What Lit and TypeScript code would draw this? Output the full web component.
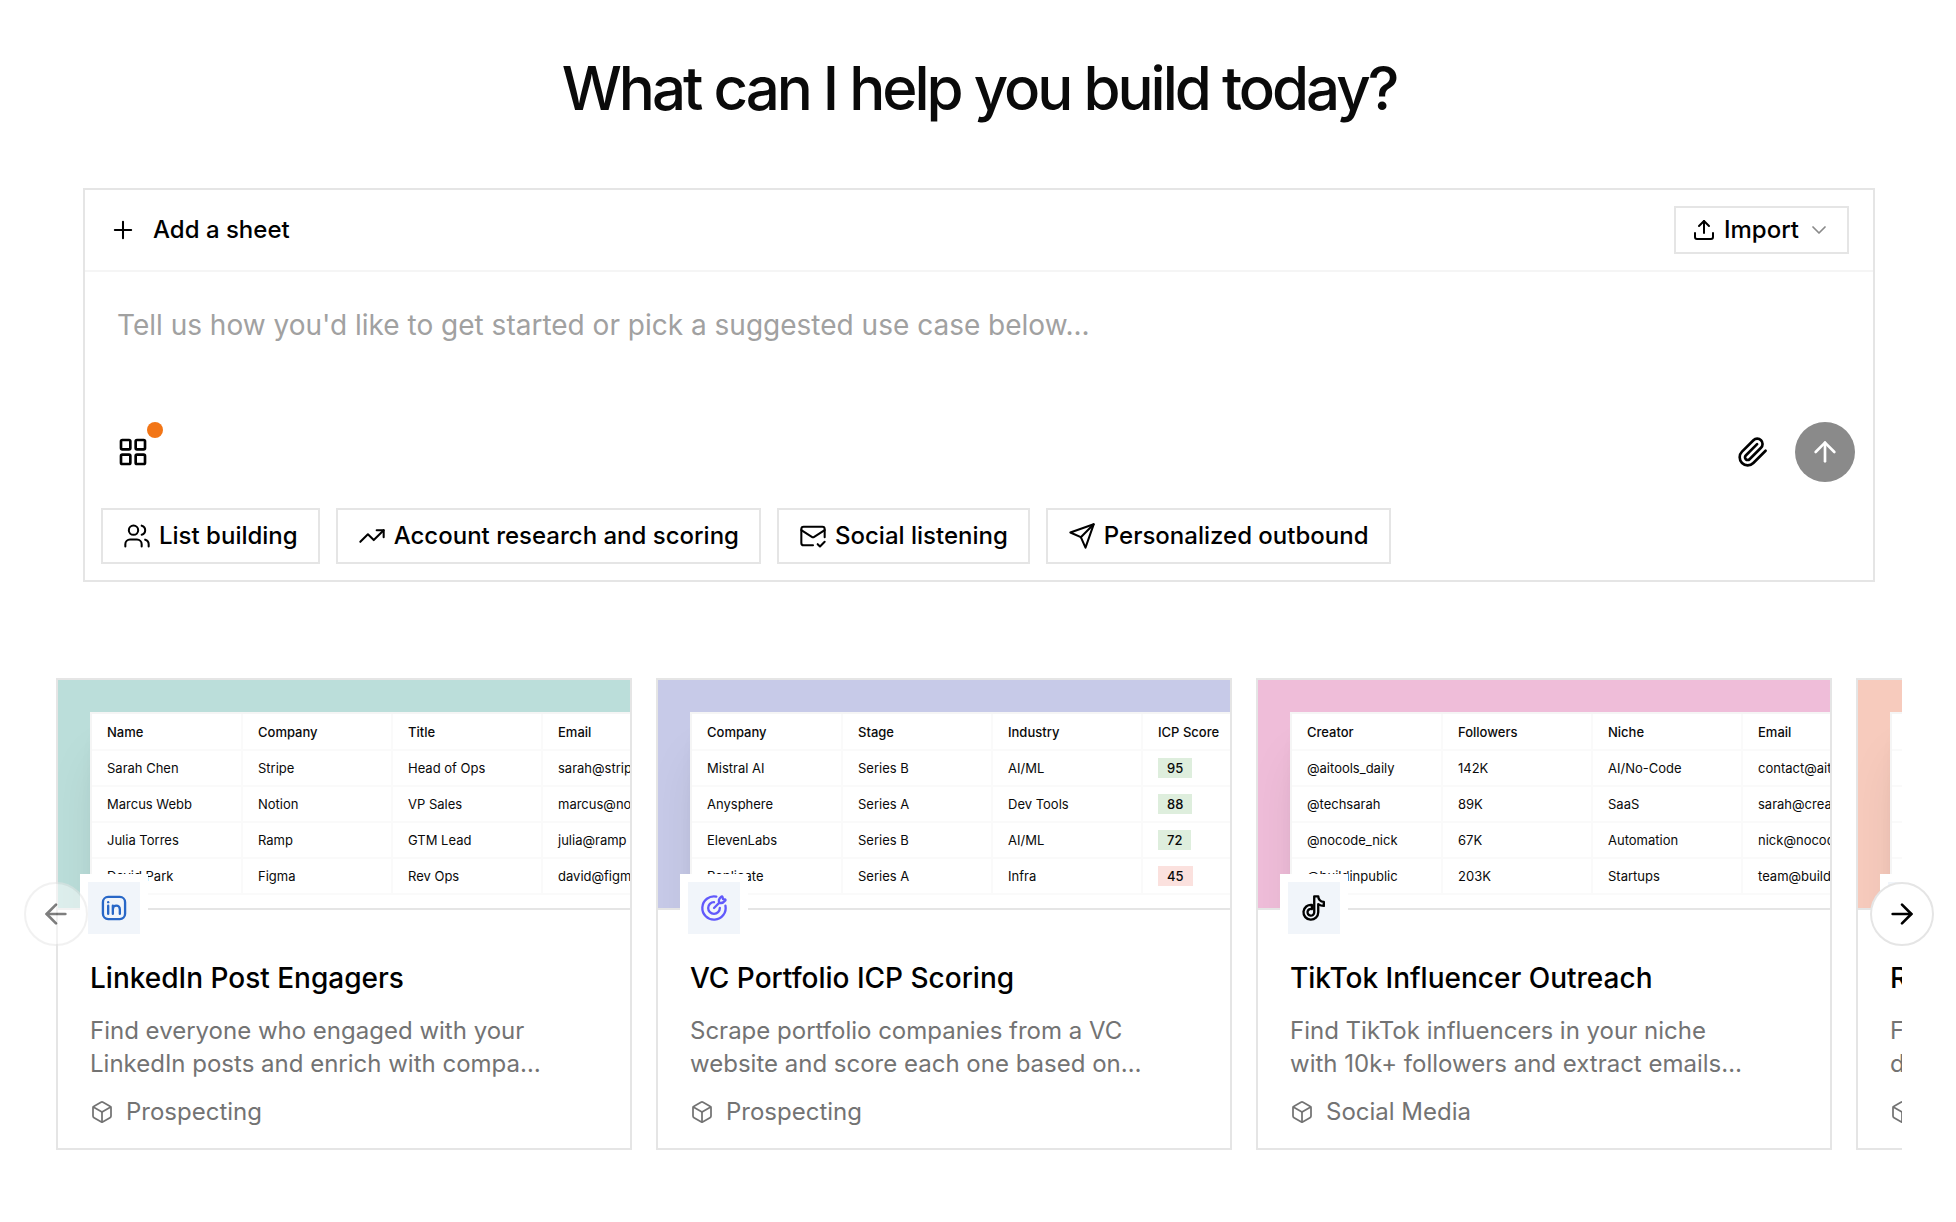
import { LitElement, html, css, svg, nothing, type SVGTemplateResult } from "lit";
import { customElement, property } from "lit/decorators.js";
import { classMap } from "lit/directives/class-map.js";

const ICONS: Record<string, SVGTemplateResult> = {
  plus: svg`<path d="M5 12h14M12 5v14"/>`,
  upload: svg`<path d="M21 15v4a2 2 0 0 1-2 2H5a2 2 0 0 1-2-2v-4"/><path d="m17 8-5-5-5 5"/><path d="M12 3v12"/>`,
  chevron: svg`<path d="m6 9 6 6 6-6"/>`,
  grid: svg`<rect x="3" y="3" width="7" height="7" rx="1"/><rect x="14" y="3" width="7" height="7" rx="1"/><rect x="14" y="14" width="7" height="7" rx="1"/><rect x="3" y="14" width="7" height="7" rx="1"/>`,
  clip: svg`<path d="m21.44 11.05-9.19 9.19a6 6 0 0 1-8.49-8.49l8.57-8.57A4 4 0 1 1 18 8.84l-8.59 8.57a2 2 0 0 1-2.83-2.83l8.49-8.48"/>`,
  up: svg`<path d="m5 12 7-7 7 7"/><path d="M12 19V5"/>`,
  left: svg`<path d="m12 19-7-7 7-7"/><path d="M19 12H5"/>`,
  right: svg`<path d="M5 12h14"/><path d="m12 5 7 7-7 7"/>`,
  users: svg`<path d="M16 21v-2a4 4 0 0 0-4-4H6a4 4 0 0 0-4 4v2"/><circle cx="9" cy="7" r="4"/><path d="M22 21v-2a4 4 0 0 0-3-3.87"/><path d="M16 3.13a4 4 0 0 1 0 7.75"/>`,
  trend: svg`<path d="m22 7-8.5 8.5-5-5L2 17"/><path d="M16 7h6v6"/>`,
  mail: svg`<path d="M22 13V6a2 2 0 0 0-2-2H4a2 2 0 0 0-2 2v12c0 1.1.9 2 2 2h8"/><path d="m22 7-8.97 5.7a1.94 1.94 0 0 1-2.06 0L2 7"/><path d="m16 19 2 2 4-4"/>`,
  send: svg`<path d="m22 2-7 20-4-9-9-4Z"/><path d="M22 2 11 13"/>`,
  box: svg`<path d="M21 8a2 2 0 0 0-1-1.73l-7-4a2 2 0 0 0-2 0l-7 4A2 2 0 0 0 3 8v8a2 2 0 0 0 1 1.73l7 4a2 2 0 0 0 2 0l7-4A2 2 0 0 0 21 16Z"/><path d="m3.3 7 8.7 5 8.7-5"/><path d="M12 22V12"/>`,
  linkedin: svg`<rect x="2.5" y="2.5" width="19" height="19" rx="4.5"/><path d="M7 10v7"/><path d="M11 13v4m0-4a3 3 0 0 1 6 0v4m-6-4v-3"/><path d="M7 7v.01"/>`,
  target: svg`<path d="M17 12a5 5 0 1 1-5-5"/><path d="M14 2.2A10 10 0 1 0 21.8 10"/><path d="m12.03 11.96 4.55-4.55m3.2-3.06-.55-1.9a.57.57 0 0 0-.91-.26c-1.45 1.2-3.04 2.8-1.74 5.22 2.5 1.16 3.99-.49 5.14-1.86a.58.58 0 0 0-.27-.93z"/>`,
  tiktok: svg`<path d="M16.82 5.13A4.76 4.76 0 0 1 15.65 2H12.2v13.78a2.88 2.88 0 1 1-2.03-2.87V9.4a6.33 6.33 0 1 0 5.47 6.27V8.68a8.2 8.2 0 0 0 4.78 1.54V6.78a4.78 4.78 0 0 1-3.6-1.65z"/>`,
};

@customElement("ui-icon")
class UiIcon extends LitElement {
  @property() name = "";
  @property({ type: Number }) size = 28;
  @property({ type: Number }) weight = 2;

  static styles = css`
    :host {
      display: flex;
      flex: none;
    }
    .glyph {
      display: block;
      fill: none;
      stroke: currentColor;
      stroke-linecap: round;
      stroke-linejoin: round;
    }
  `;

  render() {
    return html`<svg class="glyph" viewBox="0 0 24 24" width=${this.size} height=${this.size}
      stroke-width=${this.weight} aria-hidden="true">${ICONS[this.name]}</svg>`;
  }
}

type Template = {
  tone: string;
  icon: string;
  title: string;
  lines: string[];
  category: string;
  columns: string[];
  rows: string[][];
};

const TEMPLATES: Template[] = [
  {
    tone: "teal",
    icon: "linkedin",
    title: "LinkedIn Post Engagers",
    lines: ["Find everyone who engaged with your", "LinkedIn posts and enrich with compa…"],
    category: "Prospecting",
    columns: ["Name", "Company", "Title", "Email"],
    rows: [
      ["Sarah Chen", "Stripe", "Head of Ops", "sarah@stripe"],
      ["Marcus Webb", "Notion", "VP Sales", "marcus@notion"],
      ["Julia Torres", "Ramp", "GTM Lead", "julia@ramp"],
      ["David Park", "Figma", "Rev Ops", "david@figma"],
    ],
  },
  {
    tone: "indigo",
    icon: "target",
    title: "VC Portfolio ICP Scoring",
    lines: ["Scrape portfolio companies from a VC", "website and score each one based on…"],
    category: "Prospecting",
    columns: ["Company", "Stage", "Industry", "ICP Score"],
    rows: [
      ["Mistral AI", "Series B", "AI/ML", "95"],
      ["Anysphere", "Series A", "Dev Tools", "88"],
      ["ElevenLabs", "Series B", "AI/ML", "72"],
      ["Replicate", "Series A", "Infra", "45"],
    ],
  },
  {
    tone: "pink",
    icon: "tiktok",
    title: "TikTok Influencer Outreach",
    lines: ["Find TikTok influencers in your niche", "with 10k+ followers and extract emails…"],
    category: "Social Media",
    columns: ["Creator", "Followers", "Niche", "Email"],
    rows: [
      ["@aitools_daily", "142K", "AI/No-Code", "contact@ait"],
      ["@techsarah", "89K", "SaaS", "sarah@creat"],
      ["@nocode_nick", "67K", "Automation", "nick@nocod"],
      ["@buildinpublic", "203K", "Startups", "team@build"],
    ],
  },
  {
    tone: "peach",
    icon: "",
    title: "R",
    lines: ["F", "d"],
    category: "",
    columns: ["", "", "", ""],
    rows: [
      ["", "", "", ""],
      ["", "", "", ""],
      ["", "", "", ""],
      ["", "", "", ""],
    ],
  },
];

@customElement("template-card")
class TemplateCard extends LitElement {
  @property({ attribute: false }) item!: Template;

  static styles = css`
    :host {
      display: flex;
      flex: 0 0 576px;
      box-sizing: border-box;
      min-width: 0;
    }
    .card {
      flex: 1;
      min-width: 0;
      display: flex;
      flex-direction: column;
      border: 2px solid #e5e5e5;
      background: #fff;
    }
    .preview {
      height: 196px;
      padding: 32px 0 0 32px;
      overflow: hidden;
      border-bottom: 2px solid #e5e5e5;
    }
    .preview.teal { background: #bbdeda; }
    .preview.indigo { background: #c7cae8; }
    .preview.pink { background: #efbdd9; }
    .preview.peach { background: #f7cbbd; }
    .sheet {
      width: 601px;
      height: 240px;
      border: 2px solid #f5f5f5;
      background: #fff;
      box-shadow: 0 40px 50px -10px rgb(0 0 0 / 0.1), 0 16px 20px -12px rgb(0 0 0 / 0.1);
    }
    .grid {
      width: 100%;
      table-layout: fixed;
      border-collapse: separate;
      border-spacing: 0;
      font-size: 13px;
      line-height: 20px;
      color: #0a0a0a;
    }
    .cell {
      box-sizing: border-box;
      width: 150px;
      height: 36px;
      padding: 0 0 0 15px;
      border-right: 2px solid #fafafa;
      border-bottom: 2px solid #fafafa;
      text-align: left;
      font-weight: 400;
      white-space: nowrap;
    }
    .head {
      height: 37px;
      font-weight: 500;
    }
    .head:first-child { width: 151px; }
    .score {
      display: block;
      width: fit-content;
      padding: 0 9px;
      font-weight: 500;
    }
    .high { background: #deeedd; }
    .low { background: #fbe1de; }
    .body {
      position: relative;
      display: flex;
      flex-direction: column;
      padding: 48px 32px 20px;
    }
    .badge {
      position: absolute;
      left: 22px;
      top: -36px;
      display: flex;
      align-items: center;
      justify-content: center;
      width: 52px;
      height: 52px;
      border: 8px solid #fff;
      background: #f1f5fa;
      color: #000;
    }
    .badge.teal { color: #2867c7; }
    .badge.indigo { color: #6159fb; }
    .title {
      margin: 0;
      font-size: 28px;
      line-height: 40px;
      font-weight: 500;
      color: #000;
      white-space: nowrap;
    }
    .text {
      margin: 16px 0 0;
      font-size: 24px;
      line-height: 33px;
      color: #737373;
      white-space: nowrap;
    }
    .line { display: block; }
    .category {
      display: flex;
      align-items: center;
      gap: 12px;
      margin-top: 16px;
      height: 32px;
      font-size: 24px;
      line-height: 32px;
      color: #737373;
    }
  `;

  private renderCell(value: string, column: string) {
    if (column !== "ICP Score") return html`<td class="cell">${value}</td>`;
    const high = Number(value) >= 60;
    return html`<td class="cell"><span class=${classMap({ score: true, high, low: !high })}>${value}</span></td>`;
  }

  render() {
    const t = this.item;
    return html`
      <article class="card">
        <div class="preview ${t.tone}">
          <div class="sheet">
            <table class="grid">
              <thead>
                <tr>${t.columns.map((c) => html`<th class="cell head" scope="col">${c}</th>`)}</tr>
              </thead>
              <tbody>
                ${t.rows.map((row) => html`<tr>${row.map((v, i) => this.renderCell(v, t.columns[i]))}</tr>`)}
              </tbody>
            </table>
          </div>
        </div>
        <div class="body">
          <div class="badge ${t.tone}">
            ${t.icon ? html`<ui-icon name=${t.icon} .size=${28} .weight=${2}></ui-icon>` : nothing}
          </div>
          <h3 class="title">${t.title}</h3>
          <p class="text">${t.lines.map((l) => html`<span class="line">${l}</span>`)}</p>
          <div class="category"><ui-icon name="box" .size=${24} .weight=${1.75}></ui-icon>${t.category}</div>
        </div>
      </article>
    `;
  }
}

@customElement("app-root")
class AppRoot extends LitElement {
  static styles = css`
    :host {
      display: block;
      box-sizing: border-box;
      min-height: 100vh;
      padding: 52px 54px 72px 56px;
      overflow: hidden;
      background: #fff;
      color: #0a0a0a;
      font-family: Inter, "Liberation Sans", sans-serif;
    }
    button {
      display: flex;
      align-items: center;
      box-sizing: border-box;
      margin: 0;
      padding: 0;
      border: 0;
      background: none;
      color: #000;
      font: inherit;
      cursor: pointer;
    }
    .heading {
      margin: 0 0 64px;
      text-align: center;
      font-size: 60px;
      line-height: 72px;
      font-weight: 500;
      letter-spacing: -0.05em;
    }
    .composer {
      box-sizing: border-box;
      max-width: 1792px;
      margin: 0 auto 96px;
      border: 2px solid #e5e5e5;
    }
    .sheets {
      display: flex;
      align-items: center;
      justify-content: space-between;
      padding: 16px 24px;
      border-bottom: 2px solid #f5f5f5;
    }
    .add {
      gap: 16px;
      font-size: 24px;
      line-height: 32px;
      font-weight: 500;
    }
    .import {
      gap: 8px;
      height: 48px;
      padding: 0 16px;
      border: 2px solid #e5e5e5;
      font-size: 24px;
      line-height: 32px;
      font-weight: 500;
    }
    .muted { color: #8a8a8a; }
    .prompt {
      display: block;
      box-sizing: border-box;
      width: 100%;
      height: 150px;
      padding: 32px 32px 0;
      border: 0;
      outline: 0;
      resize: none;
      background: none;
      font-family: inherit;
      font-size: 28px;
      line-height: 42px;
      color: #0a0a0a;
    }
    .prompt::placeholder {
      color: #a1a1a1;
      opacity: 1;
    }
    .tools {
      display: flex;
      align-items: center;
      gap: 12px;
      padding: 0 18px;
    }
    .tool {
      position: relative;
      justify-content: center;
      width: 60px;
      height: 60px;
    }
    .spacer { flex: 1; }
    .dot {
      position: absolute;
      top: 0;
      right: 0;
      width: 16px;
      height: 16px;
      border-radius: 50%;
      background: #f27516;
    }
    .submit {
      border-radius: 50%;
      background: #8a8a8a;
      color: #fff;
    }
    .chips {
      display: flex;
      flex-wrap: wrap;
      gap: 16px;
      padding: 26px 16px 16px;
    }
    .chip {
      gap: 8px;
      height: 56px;
      padding: 0 20px;
      border: 2px solid #e5e5e5;
      font-size: 24px;
      line-height: 32px;
      font-weight: 500;
      white-space: nowrap;
    }
    .carousel { position: relative; }
    .track {
      display: flex;
      gap: 24px;
      overflow: hidden;
    }
    .arrow {
      position: absolute;
      top: calc(50% - 32px);
      justify-content: center;
      width: 64px;
      height: 64px;
      border: 2px solid #e5e5e5;
      border-radius: 50%;
      background: #fff;
    }
    .prev { left: -32px; }
    .prev:disabled {
      opacity: 0.5;
      cursor: default;
    }
    .next { right: -32px; }
  `;

  private chips = [
    { icon: "users", label: "List building" },
    { icon: "trend", label: "Account research and scoring" },
    { icon: "mail", label: "Social listening" },
    { icon: "send", label: "Personalized outbound" },
  ];

  render() {
    return html`
      <h1 class="heading">What can I help you build today?</h1>

      <section class="composer">
        <div class="sheets">
          <button class="add"><ui-icon name="plus" .size=${28} .weight=${1.75}></ui-icon>Add a sheet</button>
          <button class="import">
            <ui-icon name="upload" .size=${24} .weight=${2}></ui-icon>Import
            <ui-icon class="muted" name="chevron" .size=${24} .weight=${1.75}></ui-icon>
          </button>
        </div>
        <textarea class="prompt" aria-label="Prompt"
          placeholder="Tell us how you'd like to get started or pick a suggested use case below..."></textarea>
        <div class="tools">
          <button class="tool" aria-label="Apps">
            <ui-icon name="grid" .size=${32} .weight=${2}></ui-icon><span class="dot"></span>
          </button>
          <span class="spacer"></span>
          <button class="tool" aria-label="Attach file"><ui-icon name="clip" .size=${32} .weight=${2}></ui-icon></button>
          <button class="tool submit" aria-label="Send"><ui-icon name="up" .size=${32} .weight=${2}></ui-icon></button>
        </div>
        <div class="chips">
          ${this.chips.map((c) => html`<button class="chip"><ui-icon name=${c.icon} .size=${28} .weight=${1.75}></ui-icon>${c.label}</button>`)}
        </div>
      </section>

      <section class="carousel">
        <div class="track">${TEMPLATES.map((t) => html`<template-card .item=${t}></template-card>`)}</div>
        <button class="arrow prev" aria-label="Previous" disabled><ui-icon name="left" .size=${32}></ui-icon></button>
        <button class="arrow next" aria-label="Next"><ui-icon name="right" .size=${32}></ui-icon></button>
      </section>
    `;
  }
}
